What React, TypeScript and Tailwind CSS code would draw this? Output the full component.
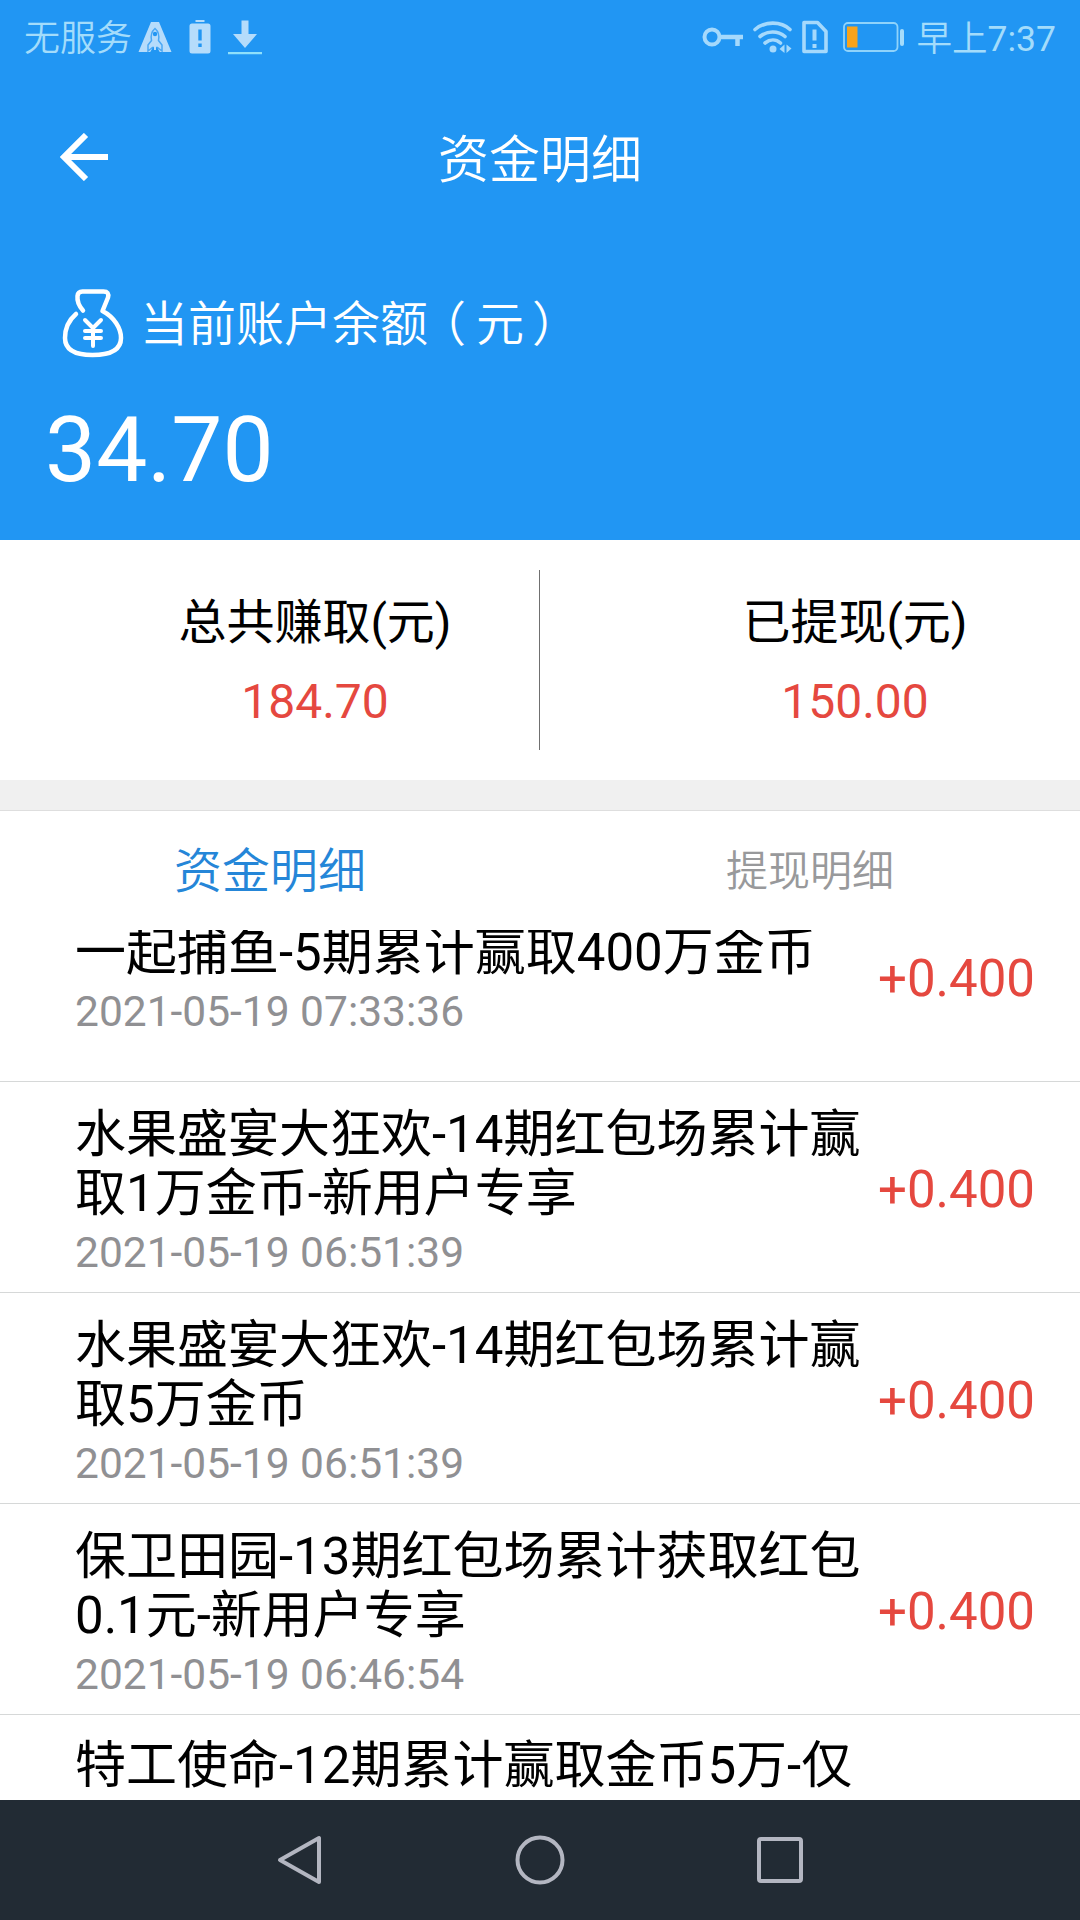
import React from 'react';

interface RecordItem {
  title: string;
  time: string;
  amount: string;
}

const records: RecordItem[] = [
  { title: '一起捕鱼-5期累计赢取400万金币', time: '2021-05-19 07:33:36', amount: '+0.400' },
  { title: '水果盛宴大狂欢-14期红包场累计赢取1万金币-新用户专享', time: '2021-05-19 06:51:39', amount: '+0.400' },
  { title: '水果盛宴大狂欢-14期红包场累计赢取5万金币', time: '2021-05-19 06:51:39', amount: '+0.400' },
  { title: '保卫田园-13期红包场累计获取红包0.1元-新用户专享', time: '2021-05-19 06:46:54', amount: '+0.400' },
];

const StatusBar: React.FC = () => (
  <div className="flex h-[74px] items-center justify-between px-6 text-4xl text-[#a3dcfb]">
    <div className="flex items-center">
      <span className="pt-1 font-[350] leading-[70px]">无服务</span>
      <svg className="ml-1.5 h-[34px] w-[34px]" viewBox="0 0 34 34" fill="#b5dcfb">
        <path d="M13 2h8l12.500 30H.5z" />
        <path
          d="M17 8.500c-3.500 3-4.500 7-3.500 12l-3.500 4.500v6l4.500-3.500h5L24 31v-6l-3.500-4.500c1-5 0-9-3.500-12z"
          stroke="#4aa8f5"
          strokeWidth="1.500"
        />
        <circle cx="17" cy="14" r="2.200" fill="#2196f3" />
        <path d="M14.800 27.500h4.400l2.800 5H12z" fill="#2196f3" />
        <path d="M16 24h2v6h-2z" />
      </svg>
      <svg className="ml-[17px] h-[34px] w-[22px]" viewBox="0 0 22 34" fill="#b5dcfb">
        <path fillRule="evenodd" d="M6.500 0h9v2h-9zM3 3.500h16a2.500 2.500 0 0 1 2.500 2.500v25a2.500 2.500 0 0 1-2.500 2.500H3A2.500 2.500 0 0 1 .5 31V6A2.500 2.500 0 0 1 3 3.500zM9.300 9.500v11h3.400v-11zM9.300 23.500v3.500h3.400v-3.500z" />
      </svg>
      <svg className="ml-[17px] h-[36px] w-[34px]" viewBox="0 0 34 36" fill="#b5dcfb">
        <path d="M13.500 1.500h7V15H29L17 29 5 15h8.500z" />
        <path d="M0 33h34v2.300H0z" fill="#8fe0fb" />
      </svg>
    </div>
    <div className="flex items-center">
      <svg className="h-[24px] w-[42px]" viewBox="0 0 42 24" fill="none" stroke="#a5d9fc" strokeWidth="4">
        <circle cx="10" cy="12" r="7.500" />
        <path d="M17.500 12H41M35.500 12v9" strokeWidth="4.500" />
      </svg>
      <svg className="ml-[8px] h-[36px] w-[42px]" viewBox="0 0 42 36" fill="none" stroke="#a5d9fc" strokeWidth="3.600" strokeLinecap="round">
        <path d="M3 10.500c10-8.500 26-8.500 35 0M8 17.500c7.500-6 18-6 25 0M13 24c5-4 11-4 15.500 0" />
        <circle cx="21" cy="30" r="3.500" fill="#a5d9fc" stroke="none" />
        <path d="M32.500 25.500v8.500l-5-4zM34.500 34v-8.500l5 4z" fill="#a5d9fc" stroke="none" />
      </svg>
      <svg className="ml-[7px] h-[34px] w-[28px]" viewBox="0 0 28 34" fill="none" stroke="#a5d9fc" strokeWidth="3.600" strokeLinejoin="round">
        <path d="M3 2.500h13.500l8.500 9v20H3z" />
        <path d="M13.500 9.500v11M13.500 24v4" strokeWidth="4" />
      </svg>
      <svg className="ml-[14px] h-[30px] w-[62px]" viewBox="0 0 62 30">
        <rect x="1" y="1" width="53.500" height="28" rx="4" fill="none" stroke="#8fd3fb" strokeWidth="1.800" />
        <rect x="4" y="4.500" width="10.500" height="21" fill="#f8a31c" />
        <rect x="57" y="7" width="4" height="17" rx="2" fill="#a5dcfb" />
      </svg>
      <span className="ml-3 pt-1 text-[35.500px] leading-[70px]">
        <span className="font-[350]">早上</span>7:37
      </span>
    </div>
  </div>
);

const Header: React.FC = () => (
  <header className="h-[540px] bg-[#2196f3] text-white">
    <StatusBar />
    <div className="grid h-[166px] grid-cols-[1fr_auto_1fr] items-center px-[60px]">
      <button className="w-12" aria-label="返回">
        <svg className="h-12 w-12" viewBox="0 0 48 48" fill="none" stroke="currentColor" strokeWidth="6">
          <path d="M26 2 4 24l22 22M4 24h44" />
        </svg>
      </button>
      <h1 className="pt-2 text-[51px] font-[350] leading-[60px]">资金明细</h1>
      <span />
    </div>
    <div className="flex h-[165px] items-center pl-[62px]">
      <svg className="h-[70px] w-[62px]" viewBox="0 0 62 70" fill="none" stroke="currentColor" strokeWidth="4.500" strokeLinecap="round" strokeLinejoin="round">
        <path d="M21 22.500C17 18 15 13 15.500 8c.3-3 2-4.500 5-4.500h21c4 0 5.500 2 4.500 6L40.500 23C52 29 59 40 59 50c0 11-9 17-28.500 17S3 61 3 50c0-9 4-18 11-24" />
        <path d="M23 32l8 8 8-8M31 40v18M23 43h16M23 50h16" strokeWidth="4" />
      </svg>
      <span className="ml-4 pt-1 text-5xl font-[350] leading-[60px]">
        当前账户余额<span className="-ml-2.5 mr-2.5">（</span>元<span className="ml-2">）</span>
      </span>
    </div>
    <p className="pl-[45px] text-[91px] leading-[90px]">34.70</p>
  </header>
);

const Stat: React.FC<{ label: string; value: string }> = ({ label, value }) => (
  <div className="flex-1 pl-[90px] pt-[53px] text-center text-5xl">
    <p className="leading-[60px]">{label}</p>
    <p className="mt-[19px] leading-[60px] text-[#e5483f]">{value}</p>
  </div>
);

const RecordRow: React.FC<RecordItem> = ({ title, time, amount }) => (
  <li className="flex h-[211px] shrink-0 items-center border-b border-[#d6d8d8] pl-[75px] pr-[45px]">
    <div className="w-[790px] pt-[11px]">
      <p className="break-all text-[51px] leading-[59px]">{title}</p>
      <p className="pt-0.5 text-[42.500px] leading-[56px] text-[#909093]">{time}</p>
    </div>
    <span className="ml-auto pt-1.5 text-[51px] text-[#e5483f]">{amount}</span>
  </li>
);

const NavBar: React.FC = () => (
  <nav className="flex h-[120px] items-center justify-center gap-[190px] bg-[#222b34] text-[#b3b6c1]">
    <svg className="h-[50px] w-[50px]" viewBox="0 0 50 50" fill="none" stroke="currentColor" strokeWidth="4" strokeLinejoin="round">
      <path d="M44 3v44L5 25z" />
    </svg>
    <svg className="h-[50px] w-[50px]" viewBox="0 0 50 50" fill="none" stroke="currentColor" strokeWidth="4">
      <circle cx="25" cy="25" r="22.500" />
    </svg>
    <svg className="h-[50px] w-[50px]" viewBox="0 0 50 50" fill="none" stroke="currentColor" strokeWidth="4">
      <rect x="4" y="4" width="42" height="42" rx="2" />
    </svg>
  </nav>
);

const App: React.FC = () => {
  return (
    <div className="flex h-[1920px] w-[1080px] flex-col overflow-hidden bg-white font-['Roboto','Noto_Sans_CJK_SC',sans-serif] text-black">
      <Header />
      <section className="flex h-[240px]">
        <Stat label="总共赚取(元)" value="184.70" />
        <div className="-ml-px mt-[30px] h-[180px] w-px bg-[#707070]" />
        <Stat label="已提现(元)" value="150.00" />
      </section>
      <div className="h-[31px] border-b border-[#dedede] bg-[#f0f0f0]" />
      <div className="flex h-[119px] items-center pt-0.5 text-center font-[350]">
        <button className="flex-1 text-5xl leading-[117px] text-[#2586d8]">资金明细</button>
        <button className="flex-1 text-[42px] leading-[117px] text-[#98999b]">提现明细</button>
      </div>
      {/* list is scrolled a little, the first row slides under the tabs */}
      <ul className="flex h-[870px] flex-col overflow-hidden">
        <li className="-mt-[59px] h-0 shrink-0" />
        {records.map((r, i) => (
          <RecordRow key={i} {...r} />
        ))}
        <li className="shrink-0 pl-[75px] pt-[21px]">
          <p className="text-[51px] leading-[59px]">特工使命-12期累计赢取金币5万-仅</p>
        </li>
      </ul>
      <NavBar />
    </div>
  );
};

export default App;
